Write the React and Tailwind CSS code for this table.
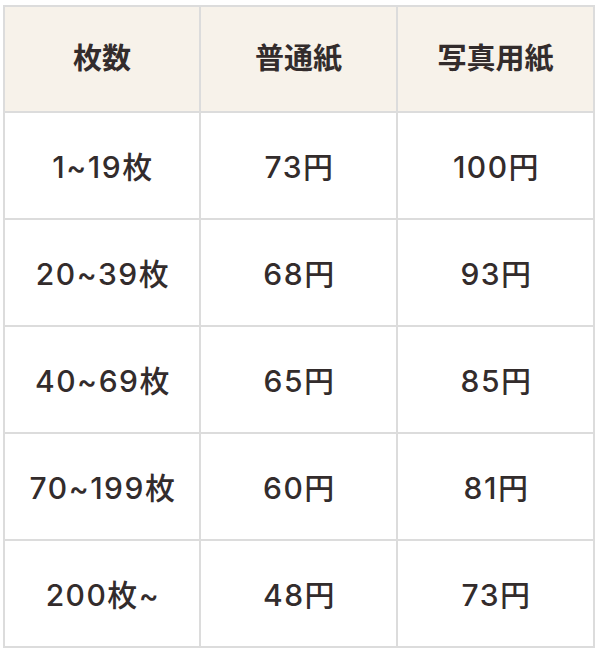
const rows = [
  ["1~19枚", "73円", "100円"],
  ["20~39枚", "68円", "93円"],
  ["40~69枚", "65円", "85円"],
  ["70~199枚", "60円", "81円"],
  ["200枚~", "48円", "73円"],
];

export default function App() {
  return (
    <div className="w-[600px] h-[656px] bg-white pt-[5px] pl-[3px]">
      <div
        className="grid grid-cols-[196px_197px_197px] w-[592px] border-l-2 border-t-2 border-[#dcdcdc] text-[#332c2c] text-[30px] font-medium"
        style={{ fontFamily: 'Inter, "Noto Sans CJK JP", sans-serif' }}
      >
        {["枚数", "普通紙", "写真用紙"].map((h) => (
          <div
            key={h}
            className="h-[106px] flex items-center justify-center bg-[#f7f2ea] border-r-2 border-b-2 border-[#dcdcdc] text-[29px] font-semibold"
          >
            {h}
          </div>
        ))}
        {rows.map((row) =>
          row.map((cell, i) => (
            <div
              key={row[0] + i}
              className="h-[107px] flex items-center justify-center pt-[3px] pl-[2px] tracking-[1.5px] border-r-2 border-b-2 border-[#dcdcdc]"
            >
              {cell}
            </div>
          ))
        )}
      </div>
    </div>
  );
}
